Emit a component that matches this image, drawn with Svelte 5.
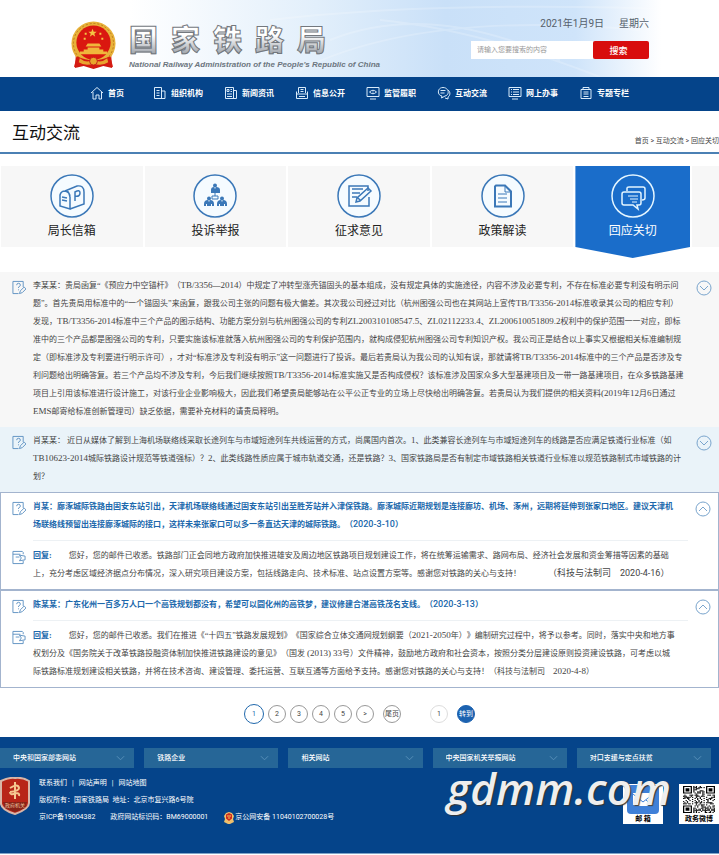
<script>
	const nav = ['首页', '组织机构', '新闻资讯', '信息公开', '监管履职', '互动交流', '网上办事', '专题专栏'];

	const navIcons = [
		'M1 7 7 1.500 13 7M3 6v7h3V9h3v4h2.500V6',
		'M1.500 1.500h7v11h-7zM9 5h3v7.500H8M3.500 4.500h3M3.500 7h3M3.500 9.500h3',
		'M1.500 1.500h8v11h-8zM10 4.500h2.500v8H9M3 3.500h2v2H3zM6.500 3.500H8M6.500 5.500H8M3 8h5M3 10.500h5',
		'M3.500 7V1.500h7V7M1.500 5.500v7h11v-7M1.500 8h11M5.500 3.500h3M5.500 5.500h3M4 10.500h6',
		'M1 1.500h12v9H1zM4 13h6M3.500 6Q7 2.500 10.500 6 7 9.500 3.500 6zM6.500 6h1',
		'M6 1.500c-6 0-6 8-1 8.500l-.500 2L8 10c5-1 4-8.500-2-8.500zM3.500 4.500h5M3.500 7h4M11 4c3 2 2 6 0 7v2L8 12',
		'M1 1.500h12v9H1zM4 13h6M3 3.500h1M5 3.500h6M3 6h1M5 6h6M3 8.500h1M5 8.500h6',
		'M2 3.500h10v9H2zM4 3V1.500h6V3M4.500 6h5M4.500 8h5M4.500 10.500h5'
	];

	const tabs = ['局长信箱', '投诉举报', '征求意见', '政策解读', '回应关切'];

	let items = [
		{
			lines: [
				'李某某：贵局函复“《预应力中空锚杆》（TB/3356—2014）中规定了冲转型涨壳锚固头的基本组成，没有规定具体的实施途径，内容不涉及必要专利，不存在标准必要专利没有明示问',
				'题”。首先贵局用标准中的“一个锚固头”来函复，跟我公司主张的问题有极大偏差。其次我公司经过对比（杭州图强公司也在其网站上宣传TB/T3356-2014标准收录其公司的相应专利）',
				'发现，TB/T3356-2014标准中三个产品的图示结构、功能方案分别与杭州图强公司的专利ZL200310108547.5、ZL02112233.4、ZL200610051809.2权利中的保护范围一一对应，即标',
				'准中的三个产品都是图强公司的专利，只要实施该标准就落入杭州图强公司的专利保护范围内，就构成侵犯杭州图强公司专利知识产权。我公司正是结合以上事实又根据相关标准编制规',
				'定（即标准涉及专利要进行明示许可），才对“标准涉及专利没有明示”这一问题进行了投诉。最后若贵局认为我公司的认知有误，那就请将TB/T3356-2014标准中的三个产品是否涉及专',
				'利问题给出明确答复。若三个产品均不涉及专利，今后我们继续按照TB/T3356-2014标准实施又是否构成侵权？该标准涉及国家众多大型基建项目及一带一路基建项目，在众多铁路基建',
				'项目上引用该标准进行设计施工，对该行业企业影响极大，因此我们希望贵局能够站在公平公正专业的立场上尽快给出明确答复。若贵局认为我们提供的相关资料(2019年12月6日通过',
				'EMS邮寄给标准创新管理司）缺乏依据，需要补充材料的请贵局释明。'
			]
		},
		{
			lines: [
				'肖某某： 近日从媒体了解到上海机场联络线采取长途列车与市域短途列车共线运营的方式，尚属国内首次。1、此类兼容长途列车与市域短途列车的线路是否应满足铁道行业标准（如',
				'TB10623-2014城际铁路设计规范等铁道强标）？2、此类线路性质应属于城市轨道交通，还是铁路？3、国家铁路局是否有制定市域铁路相关铁道行业标准以规范铁路制式市域铁路的计',
				'划？'
			]
		},
		{
			lines: [
				'肖某：廊涿城际铁路由固安东站引出，天津机场联络线通过固安东站引出至胜芳站并入津保铁路。廊涿城际近期规划是连接廊坊、机场、涿州，远期将延伸到张家口地区。建议天津机',
				'场联络线预留出连接廊涿城际的接口，这样未来张家口可以多一条直达天津的城际铁路。（2020-3-10）'
			],
			reply: [
				'您好，您的邮件已收悉。铁路部门正会同地方政府加快推进雄安及周边地区铁路项目规划建设工作，将在统筹运输需求、路网布局、经济社会发展和资金筹措等因素的基础',
				'上，充分考虑区域经济据点分布情况，深入研究项目建设方案，包括线路走向、技术标准、站点设置方案等。感谢您对铁路的关心与支持！'
			],
			sign: '（科技与法制司　2020-4-16）'
		},
		{
			lines: [
				'陈某某：广东化州一百多万人口一个高铁规划都没有，希望可以圆化州的高铁梦，建议修建合湛高铁茂名支线。（2020-3-13）'
			],
			reply: [
				'您好，您的邮件已收悉。我们在推进《“十四五”铁路发展规划》《国家综合立体交通网规划纲要（2021-2050年）》编制研究过程中，将予以参考。同时，落实中央和地方事',
				'权划分及《国务院关于改革铁路投融资体制加快推进铁路建设的意见》（国发 (2013) 33号）文件精神，鼓励地方政府和社会资本，按照分类分层建设原则投资建设铁路，可考虑以城',
				'际铁路标准规划建设相关铁路，并将在技术咨询、建设管理、委托运营、互联互通等方面给予支持。感谢您对铁路的关心与支持！（科技与法制司　2020-4-8）'
			]
		}
	];

	const pages = ['1', '2', '3', '4', '5', '>', '尾页'];
	const links = ['中央和国家部委网站', '铁路企业', '相关网站', '中央国家机关举报网站', '对口支援与定点扶贫'];

	// odd entries are the latin and numeric runs
	const parts = (line) => line.split(/([A-Za-z0-9./()-]+)/);

	// cells of the QR code, the three corners are drawn apart
	const cells = [];
	for (let y = 0; y < 25; y++) {
		for (let x = 0; x < 25; x++) {
			const corner = (x < 8 && y < 8) || (x > 16 && y < 8) || (x < 8 && y > 16);
			if (!corner && (x * 7 + y * 13 + x * y * 5 + ((x * x + y) % 7)) % 9 < 4) cells.push([x, y]);
		}
	}
	const corners = [[0, 0], [18, 0], [0, 18]];
</script>

{#snippet text(line)}{#each parts(line) as part, i}{#if i % 2}<span class="latin">{part}</span>{:else}{part}{/if}{/each}{/snippet}

<header>
	<svg class="waves" viewBox="0 0 719 77" preserveAspectRatio="none" aria-hidden="true">
		<path d="M270 20Q440 0 700 10M330 40Q430 0 560 60M380 20Q480 30 600 77M300 70Q420 10 640 30" />
	</svg>
	<div class="brand">
		<svg class="emblem" viewBox="0 0 48 50" aria-hidden="true">
			<path d="M6 34 5 48l9-2 10 3 10-3 9 2-1-14z" fill="#cf1a12" />
			<circle cx="24" cy="23" r="22.500" fill="#e8b23a" />
			<circle cx="24" cy="23" r="20.500" fill="none" stroke="#b9791c" stroke-dasharray="2 2" />
			<circle cx="24" cy="22" r="17.500" fill="#da1710" />
			<path d="m23 8 1.200 3h3l-2.400 2 1 3-2.800-2-2.800 2 1-3-2.400-2h3zM15 12h2v2h-2zM30 12h2v2h-2zM14 17h2v2h-2zM32 17h2v2h-2z" fill="#f3c544" />
			<path d="M16 26l2-3h12l2 3zM18 27h12v3H18zM10 31h28v3H10zM14 29h20v2H14z" fill="#f0b63b" />
			<path d="M7 36q17 8 34 0l3 11-9-2-11 3-11-3-9 2z" fill="#d51b12" />
			<path d="M10 38q7 6 14 1 7 5 14-1l1 4q-8 5-15 1-7 4-15-1z" fill="#e9a42f" />
			<circle cx="24" cy="41" r="4" fill="#e8a62c" stroke="#c4201a" />
		</svg>
		<div>
			<h1>{#each '国家铁路局' as char}<span>{char}</span>{/each}</h1>
			<p>National Railway Administration of the People's Republic of China</p>
		</div>
	</div>
	<div class="tools">
		<time datetime="2021-01-09">2021年1月9日　&nbsp;&nbsp;星期六</time>
		<form>
			<input type="text" aria-label="搜索内容" placeholder="请输入您要搜索的内容" />
			<button type="button">搜索</button>
		</form>
	</div>
</header>

<nav>
	{#each nav as name, i}
		<a href="#{i}">
			<svg viewBox="0 0 14 14" aria-hidden="true"><path d={navIcons[i]} /></svg>
			{name}
		</a>
	{/each}
</nav>

<main>
	<div class="title">
		<h2>互动交流</h2>
		<p><a href="#home">首页</a> &gt; <a href="#talk">互动交流</a> &gt; <a href="#reply">回应关切</a></p>
	</div>

	<div class="tabs">
		{#each tabs as tab, i}
			<a href="#tab{i}" class="tab" class:active={i === 4}>
				<svg viewBox="0 0 44 44" aria-hidden="true">
					<circle cx="22" cy="22" r="21" class="ring" />
					{#if i === 0}
						<path d="M10 32V21q1-4 5-4 5 1 5 6v12zM15 17l12-5q7-1 7 6v12l-14 5M20 23q-1-5-3-6" />
						<path d="m12 23 5 1m-5 2 5 1M25 27v-9q5-3 5 1t-5 3" />
					{:else if i === 1}
						<path class="solid" d="M18 19v-3q0-3 3-3l1 2 1-2q4 0 4 3v3zM11 32v-2q0-4 4-4l1 2 1-2q4 0 4 4v2h-2v-2h-1v2h-4v-2h-1v2zM24 32v-2q0-4 4-4l1 2 1-2q4 0 4 4v2h-2v-2h-1v2h-4v-2h-1v2z" />
						<circle class="solid" cx="22" cy="11.500" r="2" />
						<circle class="solid" cx="16" cy="24.500" r="2" />
						<circle class="solid" cx="29" cy="24.500" r="2" />
						<path d="M19 22h6v3h-6zM22 19v3" stroke-width="1" />
					{:else if i === 2}
						<path d="M31 17v-5H12v20h20v-9M15 15h11M15 19h8M15 23h5" />
						<path d="m19 28 1-4 11-10 3 3-11 10zM21 24l3 3" />
					{:else if i === 3}
						<path d="M15 11.500h9l6 6v15H14v-20z" stroke-width="2" />
						<path d="M24 12v6h6M17 20h9M17 24h9M17 28h9" stroke-width="1" />
					{:else}
						<path d="M16 17v-3q0-1 2-1h14q2 0 2 2v9q0 2-3 2" />
						<path d="M13 18h15q2 0 2 2v9q0 2-2 2h-2l1 4-5-4h-9q-2 0-2-2v-9q0-2 2-2z" />
						<path d="M17 22h10M19 25h8M21 28h5" stroke-width="1" />
					{/if}
				</svg>
				<span>{tab}</span>
			</a>
		{/each}
		<div class="rest"></div>
	</div>

	{#each items as item, i}
		<article class:tinted={i === 1} class:open={item.reply}>
			<svg class="mark" viewBox="0 0 15 15" aria-hidden="true">
				<path d="M12 7V1H1v13h6M5 5q0-2 2-2t2 2q0 1-2 2v1M7 9.500v1M8 14l1-3 4-4 2 2-4 4z" />
			</svg>
			<div class="question">
				{#each item.lines as line}
					<div>{@render text(line)}</div>
				{/each}
			</div>
			<button type="button" class="toggle" aria-label={item.reply ? '收起' : '展开'}>
				<svg viewBox="0 0 16 16" aria-hidden="true">
					<circle cx="8" cy="8" r="7" />
					<path d={item.reply ? 'm4 10 4-4 4 4' : 'm4 6 4 4 4-4'} />
				</svg>
			</button>
			{#if item.reply}
				<svg class="mark reply-mark" viewBox="0 0 15 15" aria-hidden="true">
					<path d="M12 4V2L11 1H1v13h11v-3M1 4h8M4 7h4M8 5l6 1v4l-6 1 2-3z" />
				</svg>
				<div class="reply">
					{#each item.reply as line, n}
						<div>
							{#if n === 0}<strong>回复:</strong>{/if}{@render text(line)}{#if item.sign && n === item.reply.length - 1}<span class="sign">{item.sign}</span>{/if}
						</div>
					{/each}
				</div>
			{/if}
		</article>
	{/each}

	<div class="pages">
		{#each pages as page, i}
			<a href="#page{i}" class:current={i === 0}>{page}</a>
		{/each}
		<input type="text" value="1" aria-label="页码" />
		<button type="button">转到</button>
	</div>
</main>

<footer>
	<div class="links">
		{#each links as link}
			<label>
				<select aria-label={link}><option>{link}</option></select>
				<svg viewBox="0 0 10 6" aria-hidden="true"><path d="m1 1 4 4 4-4" /></svg>
			</label>
		{/each}
	</div>
	<div class="info">
		<svg class="shield" viewBox="0 0 31 38" aria-hidden="true">
			<path d="M1 4Q10 0 15 1q7-1 14 3v22q0 6-14 11Q2 33 1 27z" fill="#b82518" stroke="#d8b5a7" stroke-width="2" />
			<path d="M3 25h24l-2 6-10 4-10-4z" fill="#862318" />
			<path d="M15 5v17M10 11q8-5 9 0 0 3-9 4M10 15q0 4 6 1 4 0 3 3" fill="none" stroke="#f5c891" stroke-width="2" />
			<text x="15" y="30" text-anchor="middle">政府机关</text>
		</svg>
		<div class="legal">
			<p class="about"><a href="#contact">联系我们</a><span>|</span><a href="#notice">网站声明</a><span>|</span><a href="#map">网站地图</a></p>
			<p>版权所有：国家铁路局 &nbsp;地址：北京市复兴路6号院</p>
			<p class="records">
				<span>京ICP备19004382</span>
				<span>政府网站标识码：BM69000001</span>
				<span class="police">
					<svg viewBox="0 0 12 12" aria-hidden="true">
						<path d="M1 4l2-3 3-1 3 1 2 3-1 3 1 3-4 2H5l-4-2 1-3z" fill="#f0c06c" />
						<path d="M3 2.500 6 1l3 1.500v4L6 9 3 6.500z" fill="#cf2a1b" />
						<path d="M4 4h4M5 6h2" stroke="#f3c65c" />
					</svg>京公网安备 11040102700028号
				</span>
			</p>
		</div>
		<a class="tile" href="#mail">
			<svg viewBox="0 0 40 40" aria-hidden="true">
				<path d="M0 0h40v40H0z" fill="#fff" />
				<rect x="4" y="1" width="32" height="29" rx="4" fill="#3f80d8" />
				<path d="M10 9h20v13H10z" fill="#fff" />
				<path d="m10 10 10 8 10-8M10 22l7-6M30 22l-7-6" fill="none" stroke="#3f80d8" />
				<text x="20" y="37" text-anchor="middle">邮 箱</text>
			</svg>
		</a>
		<a class="tile" href="#weibo">
			<svg viewBox="0 0 40 40" aria-hidden="true">
				<path d="M0 0h40v40H0z" fill="#fff" />
				<svg x="4" y="2" width="32" height="27" viewBox="0 0 25 25" preserveAspectRatio="none">
					{#each cells as [x, y]}
						<rect {x} {y} width="1" height="1" />
					{/each}
					{#each corners as [x, y]}
						<path d="M{x} {y}h7v7h-7zm1 1v5h5v-5zm1 1h3v3h-3z" fill-rule="evenodd" />
					{/each}
				</svg>
				<text x="20" y="37" text-anchor="middle">政务微博</text>
			</svg>
		</a>
		<div class="watermark">gdmm.com</div>
	</div>
</footer>

<style>
	:global(body) {
		margin: 0;
		background: #fff;
		color: #444;
		font-family: Roboto, "Noto Sans CJK SC", sans-serif;
		text-spacing-trim: space-all;
		overflow-x: hidden;
	}
	h1, h2, p {
		margin: 0;
		font-weight: normal;
	}
	a {
		color: inherit;
		text-decoration: none;
	}
	svg {
		display: block;
		flex: none;
	}
	input, button, select {
		box-sizing: border-box;
		margin: 0;
		padding: 0;
		border: none;
		border-radius: 0;
		font-family: inherit;
	}
	header {
		position: relative;
		display: flex;
		justify-content: space-between;
		height: 77px;
		padding: 0 70px;
		box-sizing: border-box;
		background: linear-gradient(90deg, #fff 18%, #e2effb 44%, #c9e0f8 62%, #cfe4fa 80%, #fff 92%);
	}
	.waves {
		position: absolute;
		inset: 0;
		width: 100%;
		height: 100%;
		fill: none;
		stroke: #fff;
		stroke-opacity: 0.2;
		stroke-width: 2;
	}
	.brand {
		position: relative;
		display: flex;
		gap: 12px;
		padding-top: 21px;
	}
	.emblem {
		width: 47px;
		height: 49px;
	}
	h1 {
		display: flex;
		gap: 13px;
		font-size: 29px;
		line-height: 40px;
		font-weight: 900;
	}
	h1 span {
		background: linear-gradient(#fff 35%, #a4a9b0 80%);
		background-clip: text;
		color: transparent;
		-webkit-text-stroke: 1px #73787e;
	}
	.brand p {
		font: italic bold 8px/8px "Liberation Sans", sans-serif;
		color: #6c7680;
		white-space: nowrap;
	}
	.tools {
		position: relative;
		display: flex;
		flex-direction: column;
		align-items: flex-end;
		gap: 9px;
		padding-top: 16px;
	}
	time {
		font-size: 10px;
		line-height: 16px;
		color: #555f6b;
	}
	form {
		display: flex;
	}
	form input {
		width: 122px;
		height: 18px;
		padding-left: 6px;
		background: #fff;
		font-size: 7px;
	}
	form input::placeholder {
		color: #999;
	}
	form button {
		width: 56px;
		height: 18px;
		padding-right: 5px;
		border-radius: 2px;
		background: #d80d0d;
		color: #fff;
		font-size: 9px;
		font-weight: 500;
	}
	nav {
		display: grid;
		grid-template-columns: 63px repeat(7, 71px);
		height: 34px;
		padding-left: 90px;
		background: #05448a;
		color: #fff;
		font-size: 8px;
		font-weight: bold;
	}
	nav a {
		display: flex;
		align-items: center;
		gap: 4px;
		padding-bottom: 3px;
		white-space: nowrap;
	}
	nav svg {
		width: 14px;
		height: 14px;
		fill: none;
		stroke: #d9ebfa;
	}
	.title {
		display: flex;
		justify-content: space-between;
		height: 41px;
		padding-left: 12px;
		border-bottom: 2px solid #4b80b4;
	}
	h2 {
		font-size: 17px;
		line-height: 44px;
		color: #111;
	}
	.title p {
		padding-top: 24px;
		font-size: 7px;
		line-height: 12px;
		white-space: nowrap;
	}
	.tabs {
		display: grid;
		grid-template-columns: repeat(4, 142fr) 115fr 27fr;
		gap: 2px;
		padding: 12px 0 0 1px;
		margin-bottom: 14px;
	}
	.tab, .rest {
		height: 81px;
		margin-bottom: 11px;
		background: #f7f7f7;
	}
	.tab {
		display: flex;
		flex-direction: column;
		align-items: center;
		gap: 4px;
		box-sizing: border-box;
		padding-top: 8px;
		font-size: 12px;
		line-height: 18px;
		color: #222;
	}
	.tab svg {
		width: 44px;
		height: 44px;
		fill: none;
		stroke: #3b78b8;
		stroke-width: 1.5;
	}
	.ring {
		fill: #f5fbff;
	}
	.solid {
		fill: #3b78b8;
		stroke: none;
	}
	.active {
		height: 92px;
		margin-bottom: 0;
		background: #1a6dca;
		color: #fff;
		clip-path: polygon(0 0, 100% 0, 100% 81px, 50% 100%, 0 81px);
	}
	.active svg {
		stroke: #e3f5ff;
	}
	.active .ring {
		fill: none;
	}
	article {
		display: grid;
		grid-template-columns: 14px 1fr 16px;
		column-gap: 7px;
		box-sizing: border-box;
		padding: 5px 7px 6px 12px;
		background: #f7f7f7;
		font: 8px/18px "Liberation Serif", "Noto Sans CJK SC", serif;
	}
	.tinted {
		background: #eaf3f9;
	}
	.open {
		padding: 5px 7px 6px 11px;
		border: 1px solid #a3b4ce;
		background: #fff;
	}
	.latin {
		font-size: 9px;
		line-height: 10px;
	}
	.question, .reply {
		min-width: 0;
		white-space: nowrap;
	}
	.open .question {
		padding-bottom: 6px;
		border-bottom: 1px solid #edf1f4;
		font-family: Roboto, "Noto Sans CJK SC", sans-serif;
		font-weight: bold;
		color: #2068ac;
	}
	.open .latin {
		font-weight: 500;
	}
	.reply .latin {
		font-weight: normal;
	}
	.mark {
		width: 14px;
		height: 15px;
		margin-top: 3px;
		fill: none;
		stroke: #5e91c2;
	}
	.reply {
		margin-top: 6px;
	}
	.reply-mark {
		margin-top: 9px;
	}
	.reply strong {
		margin-right: 17px;
		color: #2068ac;
	}
	.sign {
		margin-left: 27px;
		font-family: Roboto, "Noto Sans CJK SC", sans-serif;
		font-size: 9px;
		line-height: 10px;
	}
	.toggle {
		height: 16px;
		margin-top: 3px;
		background: none;
	}
	.toggle svg {
		width: 16px;
		height: 16px;
		fill: none;
		stroke: #7aa5cd;
	}
	.pages {
		display: flex;
		justify-content: center;
		align-items: center;
		gap: 4px;
		height: 20px;
		padding: 16px 0 13px;
		font-size: 7px;
	}
	.pages a, .pages input, .pages button {
		width: 18px;
		height: 18px;
		box-sizing: border-box;
		border: 1px solid #999;
		border-radius: 50%;
		line-height: 16px;
		text-align: center;
		font-size: 7px;
		white-space: nowrap;
	}
	.pages .current {
		width: 20px;
		height: 20px;
		border-color: #2068ac;
		line-height: 18px;
		color: #2068ac;
	}
	.pages a:nth-of-type(7) {
		margin-left: 5px;
	}
	.pages input {
		margin-left: 25px;
		border-color: #ddd;
		color: #444;
	}
	.pages button {
		margin-left: 5px;
		border-color: #1c62b0;
		background: #1c62b0;
		color: #fff;
	}
	footer {
		padding: 11px 0 27px;
		border-bottom: 1px solid #7fa3c8;
		background: #05448a;
		color: #fff;
		font-size: 7px;
	}
	.links {
		display: grid;
		grid-template-columns: repeat(5, 1fr);
		gap: 10px;
		padding-right: 8px;
	}
	.links label {
		display: grid;
		align-items: center;
	}
	.links select, .links svg {
		grid-area: 1 / 1;
	}
	.links select {
		appearance: none;
		width: 100%;
		height: 20px;
		padding-left: 13px;
		background: #266697;
		color: #fff;
		font-size: 7px;
		font-weight: 500;
	}
	.links svg {
		justify-self: end;
		width: 9px;
		height: 6px;
		margin-right: 9px;
		fill: none;
		stroke: #5b93bb;
		pointer-events: none;
	}
	.info {
		position: relative;
		display: flex;
		padding-top: 7px;
	}
	.shield {
		width: 31px;
		height: 38px;
		margin: 2px 8px 0 0;
	}
	.shield text {
		font-size: 5px;
		fill: #f1c6a0;
	}
	.legal {
		flex: 1;
		font-weight: 500;
		line-height: 17px;
		white-space: nowrap;
	}
	.about, .records, .police {
		display: flex;
		align-items: center;
	}
	.about {
		gap: 5px;
	}
	.records {
		gap: 15px;
	}
	.police svg {
		width: 12px;
		height: 12px;
	}
	.tile {
		margin: 9px 0 0 16px;
		color: #222;
	}
	.tile svg {
		width: 40px;
		height: 40px;
	}
	.tile svg svg {
		width: 32px;
		height: 27px;
	}
	.tile text {
		font-size: 7px;
		font-weight: bold;
	}
	.watermark {
		position: absolute;
		right: 48px;
		top: 0;
		font: italic 600 44px/40px "Open Sans", "Noto Sans", sans-serif;
		color: #eee;
		text-shadow: 1px 1px 1px #333;
		pointer-events: none;
	}
</style>
